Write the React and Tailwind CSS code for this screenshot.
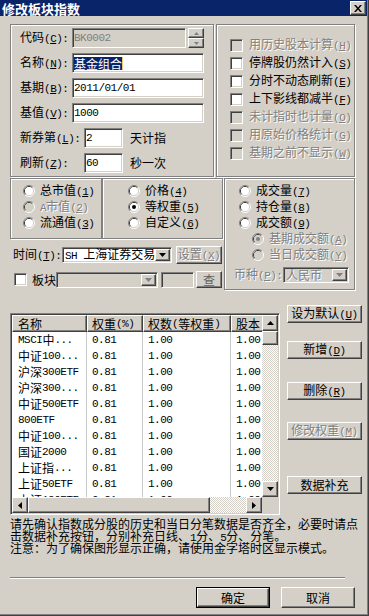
import React from "react";

const SUNKEN =
  "border border-t-[#808080] border-l-[#808080] border-b-white border-r-white shadow-[inset_1px_1px_0_#404040,inset_-1px_-1px_0_#d4d0c8]";
const RAISED =
  "border border-t-white border-l-white border-b-[#404040] border-r-[#404040] shadow-[inset_-1px_-1px_0_#808080]";
const ETCHED = "border border-[#808080] shadow-[inset_1px_1px_0_#fff,1px_1px_0_#fff]";
const DIS = "text-[#808080] [text-shadow:1px_1px_0_#fff]";
const CHECKER =
  "bg-[image:repeating-conic-gradient(#d4d0c8_0%_25%,#fff_0%_50%)] bg-[length:2px_2px]";

const CJK = /([\u3000-\u303f\u4e00-\u9fff\uff00-\uffef]+)/;

// chinese runs in Noto, latin runs in a narrow mono (SimSun look-alike)
const Txt = ({ s }) => (
  <>
    {s
      .split(CJK)
      .filter(Boolean)
      .map((p, i) =>
        CJK.test(p) ? (
          <span key={i} className="font-['Noto_Sans_CJK_SC',sans-serif] text-[12px]">
            {p}
          </span>
        ) : (
          <span key={i} className="font-['Liberation_Mono',monospace] text-[11px] tracking-[-0.5px]">
            {p}
          </span>
        )
      )}
  </>
);

const Mn = ({ k }) => (
  <span className="font-['Liberation_Mono',monospace] text-[11px] tracking-[-0.5px]">
    (<span className="underline underline-offset-1">{k}</span>)
  </span>
);

const Lbl = ({ s, k, colon }) => (
  <span className="whitespace-nowrap">
    <Txt s={s} />
    {k && <Mn k={k} />}
    {colon && <span className="font-['Liberation_Mono',monospace] text-[11px]">:</span>}
  </span>
);

const Tri = ({ dir = "down", color = "#000", small }) => {
  const big = {
    down: ["M0 0h7L3.5 4z", 7, 4],
    up: ["M0 4h7L3.5 0z", 7, 4],
    left: ["M4 0v7L0 3.5z", 4, 7],
    right: ["M0 0v7l4-3.5z", 4, 7],
  };
  const sm = { down: ["M0 0h5L2.5 3z", 5, 3], up: ["M0 3h5L2.5 0z", 5, 3] };
  const [d, w, h] = (small ? sm : big)[dir];
  return (
    <svg width={w} height={h} viewBox={`0 0 ${w} ${h}`}>
      <path d={d} fill={color} />
    </svg>
  );
};

const XIcon = () => (
  <svg width="8" height="7" viewBox="0 0 8 7">
    <path d="M0 0h2l2 2.5L6 0h2L5 3.5 8 7H6L4 4.5 2 7H0l3-3.5z" fill="#000" />
  </svg>
);

function Check({ label, k, disabled }) {
  return (
    <div className="flex items-center h-[18px] gap-[6px]">
      <span className={`w-[13px] h-[13px] shrink-0 ${SUNKEN} ${disabled ? "bg-[#d4d0c8]" : "bg-white"}`} />
      <span className={disabled ? DIS : ""}>
        <Lbl s={label} k={k} />
      </span>
    </div>
  );
}

function Radio({ label, k, checked, disabled, className = "" }) {
  return (
    <div className={`flex items-center h-[16px] gap-[5px] ${className}`}>
      <svg width="12" height="12" viewBox="0 0 12 12" className="shrink-0">
        <path d="M2.11 9.89A5.5 5.5 0 0 1 9.89 2.11" stroke="#808080" fill="none" />
        <path d="M9.89 2.11A5.5 5.5 0 0 1 2.11 9.89" stroke="#fff" fill="none" />
        <path d="M2.82 9.18A4.5 4.5 0 0 1 9.18 2.82" stroke="#404040" fill="none" />
        <path d="M9.18 2.82A4.5 4.5 0 0 1 2.82 9.18" stroke="#d4d0c8" fill="none" />
        <circle cx="6" cy="6" r="4" fill={disabled ? "#d4d0c8" : "#fff"} />
        {checked && <circle cx="6" cy="6" r="2" fill={disabled ? "#808080" : "#000"} />}
      </svg>
      <span className={disabled ? DIS : ""}>
        <Lbl s={label} k={k} />
      </span>
    </div>
  );
}

function Btn({ children, className = "", disabled }) {
  return (
    <div
      className={`${RAISED} bg-[#d4d0c8] flex items-center justify-center whitespace-nowrap ${
        disabled ? DIS : ""
      } ${className}`}
    >
      {children}
    </div>
  );
}

function Combo({ className, text, disabled }) {
  return (
    <div
      className={`${SUNKEN} ${disabled ? "bg-[#d4d0c8] " + DIS : "bg-white"} h-[16px] p-px flex items-center ${className}`}
    >
      <span className="flex-1 pl-px whitespace-nowrap overflow-hidden leading-[12px]">
        {text && <Txt s={text} />}
      </span>
      <div className={`${RAISED} bg-[#d4d0c8] w-[15px] h-[12px] flex items-center justify-center shrink-0`}>
        <Tri dir="down" color={disabled ? "#808080" : "#000"} />
      </div>
    </div>
  );
}

const rows = [
  "MSCI中...",
  "中证100...",
  "沪深300ETF",
  "沪深300...",
  "中证500ETF",
  "800ETF",
  "中证100...",
  "国证2000",
  "上证指...",
  "上证50ETF",
  "上证180ETF",
];

const cols = ["w-[75px]", "w-[56px]", "w-[88px]", "w-[60px]"];

function ScrollBtn({ dir, className = "" }) {
  return (
    <div className={`${RAISED} bg-[#d4d0c8] w-[16px] h-[16px] shrink-0 flex items-center justify-center ${className}`}>
      <Tri dir={dir} />
    </div>
  );
}

export default function App() {
  return (
    <div className="w-[369px] h-[616px] bg-[#d4d0c8] border-r border-b border-[#404040] font-['Noto_Sans_CJK_SC',sans-serif] text-[12px] leading-[14px] text-black overflow-hidden select-none">
      <div className="h-full border-r border-b border-[#808080]">
        {/* title bar */}
        <div className="h-[16px] bg-[#0a246a] flex items-center justify-between pl-[2px] pr-[1px]">
          <span className="text-white font-bold text-[13px] leading-[15px]">修改板块指数</span>
          <div className={`${RAISED} bg-[#d4d0c8] w-[16px] h-[14px] flex items-center justify-center`}>
            <XIcon />
          </div>
        </div>

        <div className="pl-[10px]">
          {/* top groups */}
          <div className="flex gap-[2px] mt-[8px]">
            <div className={`${ETCHED} w-[204px] h-[153px] pt-[3px] pl-[9px] flex flex-col gap-[5px]`}>
              <div className="flex items-center h-[20px]">
                <span className="w-[52px] shrink-0">
                  <Lbl s="代码" k="C" colon />
                </span>
                <div className={`${SUNKEN} bg-[#d4d0c8] w-[114px] h-[20px] pl-px flex items-center text-[#808080]`}>
                  <Txt s="BK0002" />
                </div>
                <div className="ml-[2px] flex flex-col w-[16px] h-[20px]">
                  <div className={`${RAISED} bg-[#d4d0c8] h-[10px] flex items-center justify-center`}>
                    <Tri dir="up" color="#808080" small />
                  </div>
                  <div className={`${RAISED} bg-[#d4d0c8] h-[10px] flex items-center justify-center`}>
                    <Tri dir="down" color="#808080" small />
                  </div>
                </div>
              </div>
              <div className="flex items-center h-[20px]">
                <span className="w-[52px] shrink-0">
                  <Lbl s="名称" k="N" colon />
                </span>
                <div className={`${SUNKEN} bg-white w-[132px] h-[20px] pl-px flex items-center`}>
                  <span className="bg-[#0a246a] text-white leading-[13px]">
                    <Txt s="基金组合" />
                  </span>
                  <span className="w-px h-[13px] bg-[#e8c870]" />
                </div>
              </div>
              <div className="flex items-center h-[20px]">
                <span className="w-[52px] shrink-0">
                  <Lbl s="基期" k="B" colon />
                </span>
                <div className={`${SUNKEN} bg-white w-[132px] h-[20px] pl-px flex items-center`}>
                  <Txt s="2011/01/01" />
                </div>
              </div>
              <div className="flex items-center h-[20px]">
                <span className="w-[52px] shrink-0">
                  <Lbl s="基值" k="V" colon />
                </span>
                <div className={`${SUNKEN} bg-white w-[132px] h-[20px] pl-px flex items-center`}>
                  <Txt s="1000" />
                </div>
              </div>
              <div className="flex items-center h-[20px]">
                <span className="w-[64px] shrink-0">
                  <Lbl s="新券第" k="L" colon />
                </span>
                <div className={`${SUNKEN} bg-white w-[39px] h-[20px] pl-px flex items-center`}>
                  <Txt s="2" />
                </div>
                <span className="ml-[7px]">天计指</span>
              </div>
              <div className="flex items-center h-[20px]">
                <span className="w-[64px] shrink-0">
                  <Lbl s="刷新" k="Z" colon />
                </span>
                <div className={`${SUNKEN} bg-white w-[39px] h-[20px] pl-px flex items-center`}>
                  <Txt s="60" />
                </div>
                <span className="ml-[7px]">秒一次</span>
              </div>
            </div>

            <div className={`${ETCHED} w-[139px] h-[153px] pt-[11px] pl-[13px] flex flex-col`}>
              <Check label="用历史股本计算" k="H" disabled />
              <Check label="停牌股仍然计入" k="S" />
              <Check label="分时不动态刷新" k="E" />
              <Check label="上下影线都减半" k="F" />
              <Check label="未计指时也计量" k="O" disabled />
              <Check label="用原始价格统计" k="G" disabled />
              <Check label="基期之前不显示" k="W" disabled />
            </div>
          </div>

          {/* middle */}
          <div className="flex mt-px">
            <div className="flex flex-col w-[213px]">
              <div className="flex h-[61px]">
                <div className={`${ETCHED} w-[92px] h-full pt-[4px] pl-[12px] flex flex-col`}>
                  <Radio label="总市值" k="1" />
                  <Radio label="A市值" k="2" disabled />
                  <Radio label="流通值" k="3" />
                </div>
                <div className={`${ETCHED} w-[121px] h-full pt-[4px] pl-[25px] flex flex-col`}>
                  <Radio label="价格" k="4" />
                  <Radio label="等权重" k="5" checked />
                  <Radio label="自定义" k="6" />
                </div>
              </div>
              <div className="flex items-center h-[18px] mt-[7px]">
                <span className="w-[49px] ml-[3px] shrink-0">
                  <Lbl s="时间" k="T" colon />
                </span>
                <Combo className="w-[110px]" text="SH 上海证券交易" />
                <Btn className="ml-[4px] w-[46px] h-[18px]" disabled>
                  <Lbl s="设置" k="X" />
                </Btn>
              </div>
              <div className="flex items-center h-[17px] mt-[7px]">
                <span className={`ml-[4px] w-[13px] h-[13px] shrink-0 ${SUNKEN} bg-white`} />
                <span className="ml-[5px] w-[24px] shrink-0">板块</span>
                <Combo className="w-[102px]" disabled />
                <div className={`${SUNKEN} bg-[#d4d0c8] ml-[3px] w-[33px] h-[16px]`} />
                <Btn className="ml-[2px] w-[26px] h-[17px] text-[#606060]">查</Btn>
              </div>
            </div>

            <div className={`${ETCHED} ml-px w-[131px] h-[112px] pt-[4px] flex flex-col`}>
              <Radio className="pl-[14px]" label="成交量" k="7" />
              <Radio className="pl-[14px]" label="持仓量" k="8" />
              <Radio className="pl-[14px]" label="成交额" k="9" />
              <Radio className="pl-[27px]" label="基期成交额" k="A" checked disabled />
              <Radio className="pl-[27px]" label="当日成交额" k="Y" disabled />
              <div className="flex items-center h-[16px] mt-[4px] pl-[9px]">
                <span className={`${DIS} w-[49px] shrink-0`}>
                  <Lbl s="币种" k="P" colon />
                </span>
                <Combo className="w-[66px]" text="人民币" disabled />
              </div>
            </div>
          </div>

          {/* list + buttons */}
          <div className="flex items-start mt-[15px]">
            <div className={`${SUNKEN} bg-white mt-[8px] w-[270px] h-[202px] p-px`}>
              <div className="grid grid-cols-[1fr_16px] grid-rows-[1fr_16px] w-full h-full">
                <div className="overflow-hidden">
                  <div className="flex h-[17px]">
                    {["名称", "权重(%)", "权数(等权重)", "股本"].map((h, i) => (
                      <div
                        key={h}
                        className={`${RAISED} bg-[#d4d0c8] ${cols[i]} shrink-0 h-full flex items-center ${
                          i === 0 ? "pl-[5px]" : "pl-[4px]"
                        } whitespace-nowrap`}
                      >
                        <Txt s={h} />
                      </div>
                    ))}
                  </div>
                  {rows.map((r, n) => (
                    <div key={n} className="flex h-[16px]">
                      {[r, "0.81", "1.00", "1.00"].map((c, i) => (
                        <div
                          key={i}
                          className={`${cols[i]} shrink-0 h-full flex items-center border-r border-[#c8c8c8] whitespace-nowrap ${
                            i === 0 ? "pl-[6px]" : "pl-[5px]"
                          }`}
                        >
                          <Txt s={c} />
                        </div>
                      ))}
                    </div>
                  ))}
                </div>
                <div className={`flex flex-col ${CHECKER}`}>
                  <ScrollBtn dir="up" />
                  <div className={`${RAISED} bg-[#d4d0c8] h-[14px]`} />
                  <div className="flex-1" />
                  <ScrollBtn dir="down" />
                </div>
                <div className={`flex ${CHECKER}`}>
                  <ScrollBtn dir="left" />
                  <div className={`${RAISED} bg-[#d4d0c8] w-[182px] h-full`} />
                  <div className="flex-1" />
                  <ScrollBtn dir="right" />
                </div>
                <div className="bg-[#d4d0c8]" />
              </div>
            </div>

            <div className="ml-[7px] w-[75px] flex flex-col">
              <Btn className="h-[18px]">
                <Lbl s="设为默认" k="U" />
              </Btn>
              <Btn className="h-[18px] mt-[18px]">
                <Lbl s="新增" k="D" />
              </Btn>
              <Btn className="h-[18px] mt-[23px]">
                <Lbl s="删除" k="R" />
              </Btn>
              <Btn className="h-[18px] mt-[22px]" disabled>
                <Lbl s="修改权重" k="M" />
              </Btn>
              <Btn className="h-[18px] mt-[36px]">数据补充</Btn>
            </div>
          </div>

          {/* note */}
          <div className="mt-[3px] leading-[12px]">
            <div className="h-[12px] whitespace-nowrap">
              <Txt s="请先确认指数成分股的历史和当日分笔数据是否齐全，必要时请点" />
            </div>
            <div className="h-[12px] whitespace-nowrap">
              <Txt s="击数据补充按钮，分别补充日线、1分、5分、分笔。" />
            </div>
            <div className="h-[12px] whitespace-nowrap">
              <Txt s="注意：为了确保图形显示正确，请使用金字塔时区显示模式。" />
            </div>
          </div>

          <div className="mt-[23px] w-[335px] h-[2px] border-t border-t-[#808080] border-b border-b-white" />

          <div className="flex mt-[8px]">
            <div className="ml-[186px] w-[74px] h-[21px] border border-black">
              <Btn className="w-full h-full">确定</Btn>
            </div>
            <Btn className="ml-[11px] w-[74px] h-[21px]">取消</Btn>
          </div>
        </div>
      </div>
    </div>
  );
}
